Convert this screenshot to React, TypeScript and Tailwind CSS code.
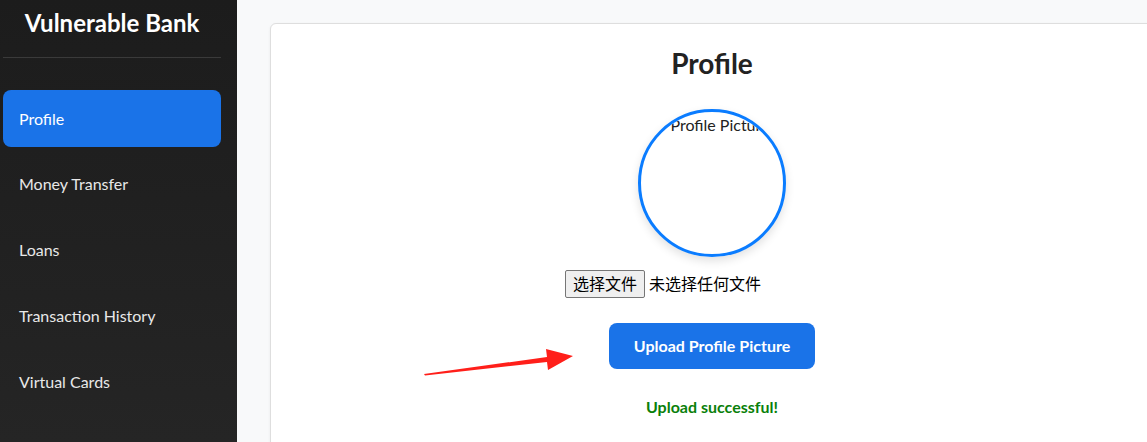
const navItems = [
  "Profile",
  "Money Transfer",
  "Loans",
  "Transaction History",
  "Virtual Cards",
  "Bill Payments",
];

function Sidebar() {
  return (
    <aside className="flex h-[442px] w-[237px] shrink-0 flex-col overflow-hidden bg-gradient-to-b from-[#1c1c1c] to-[#252525] pl-[3px] pr-[16px] text-white">
      <h1 className="pt-[7px] text-center text-[24px] font-bold leading-[32px]">
        Vulnerable Bank
      </h1>
      <div className="mt-[18px] border-b border-[#3a3a3a]" />
      <nav className="mt-[32px] flex flex-col gap-[8.75px]">
        {navItems.map((label, i) => (
          <div
            key={label}
            className={
              i === 0
                ? "flex h-[57px] shrink-0 items-center rounded-[8px] bg-[#1a73e8] px-4 text-[16px]"
                : "flex h-[57px] shrink-0 items-center rounded-[8px] px-4 text-[16px] text-[#e8e8e8]"
            }
          >
            {label}
          </div>
        ))}
      </nav>
    </aside>
  );
}

function Arrow() {
  return (
    <svg
      className="pointer-events-none absolute left-[424px] top-[347px]"
      width="152"
      height="30"
      viewBox="424 347 152 30"
    >
      <polygon
        points="424,374 547,357 546,349 573,356 548,370 547,362 425,375.5"
        fill="#ff1f1a"
      />
    </svg>
  );
}

export default function App() {
  return (
    <div
      className="relative flex h-[442px] w-[1147px] overflow-hidden bg-[#f8f9fa]"
      style={{ fontFamily: 'Lato, "Noto Sans CJK SC", sans-serif' }}
    >
      <Sidebar />
      <main className="flex-1 pl-[33px] pt-[23px]">
        <section className="flex h-[460px] w-[884px] flex-col items-center rounded-[6px] border border-[#dedede] bg-white pt-[22px] shadow-[0_1px_3px_rgba(0,0,0,0.06)]">
          <h2 className="text-[28px] font-bold leading-[34px] text-[#222]">
            Profile
          </h2>
          <div className="mt-[29px] flex h-[148px] w-[148px] justify-center overflow-hidden rounded-full border-[3px] border-[#0a7cff] shadow-[0_4px_10px_rgba(0,0,0,0.12)]">
            <span className="mt-[3px] whitespace-nowrap pl-[16px] text-[16px] leading-[20px] text-[#222]">
              Profile Picture
            </span>
          </div>
          <div className="mt-[13px] flex w-[294px] items-center gap-[4px]">
            <span className="flex h-[28px] items-center rounded-[2px] border border-[#767676] bg-[#efefef] px-[7px] text-[16px] text-black">
              选择文件
            </span>
            <span className="text-[16px] text-black">未选择任何文件</span>
          </div>
          <button
            type="button"
            className="mt-[25px] h-[46px] w-[206px] rounded-[8px] bg-[#1a73e8] text-[16px] font-bold text-white"
          >
            Upload Profile Picture
          </button>
          <p className="mt-[27px] text-[16px] font-bold leading-[22px] text-[#0a7f0a]">
            Upload successful!
          </p>
        </section>
      </main>
      <Arrow />
    </div>
  );
}
